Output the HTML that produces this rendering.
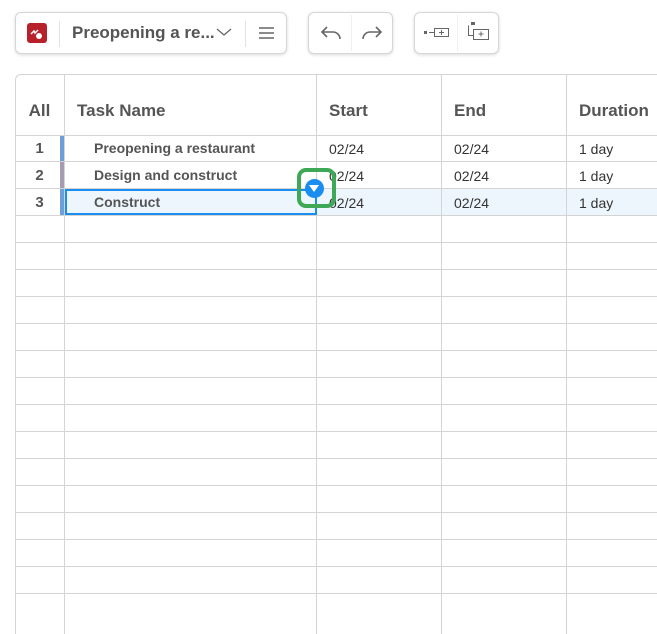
<!DOCTYPE html>
<html><head><style>
*{box-sizing:border-box;margin:0;padding:0}
body{width:657px;height:618px;background:#fff;font-family:"Liberation Sans",sans-serif;position:relative;overflow:hidden;color:#555}
.grp{position:absolute;top:12px;height:42px;border:1px solid #d6d6d6;border-radius:6px;background:#fff;box-shadow:0 1px 3px rgba(0,0,0,.15)}
.sep{position:absolute;top:8px;width:1px;height:26px;background:#e2e2e2}
.sep2{position:absolute;top:2px;width:1px;height:36px;background:#f0f0f0}
.grid{position:absolute;left:15px;top:74px;width:700px;height:560px;border-left:1px solid #d4d4d4;border-top:1px solid #d4d4d4;border-top-left-radius:6px}
.vl{position:absolute;top:74px;width:1px;height:560px;background:#d4d4d4}
.hl{position:absolute;left:15px;width:660px;height:1px;background:#d4d4d4}
.t{position:absolute;font-size:14px;color:#333}
.h{position:absolute;font-size:17px;font-weight:bold;color:#555;top:101px}
.n{position:absolute;font-size:15px;font-weight:bold;color:#555;width:49px;text-align:center;left:15px}
.b{position:absolute;font-size:14px;font-weight:bold;color:#555;left:94px}
</style></head><body>
<div class="grp" style="left:15px;width:272px">
 <div style="position:absolute;left:11px;top:10px;width:20px;height:20px;background:#b8202a;border-radius:3px"></div>
 <svg style="position:absolute;left:13px;top:13px" width="16" height="14"><path d="M2 8l3-3 1 2 3-3" stroke="#fff" stroke-width="1.5" fill="none"/><circle cx="10" cy="10" r="3" fill="#fff"/></svg>
 <div class="sep" style="left:43px"></div>
 <div style="position:absolute;left:56px;top:10px;font-size:17px;font-weight:bold;color:#555">Preopening a re...</div>
 <svg style="position:absolute;left:200px;top:14px" width="16" height="10"><path d="M1 2l7 6 7-6" stroke="#666" stroke-width="1.3" fill="none"/></svg>
 <div class="sep" style="left:229px"></div>
 <svg style="position:absolute;left:243px;top:13px" width="16" height="14"><path d="M0 2h15M0 7h15M0 12h15" stroke="#666" stroke-width="1.4"/></svg>
</div>
<div class="grp" style="left:308px;width:85px">
 <svg style="position:absolute;left:12px;top:12px" width="22" height="16"><path d="M6 2L1 7l5 5M1 7h11a7 7 0 0 1 7 7" stroke="#666" stroke-width="1.6" fill="none"/></svg>
 <div class="sep2" style="left:42px"></div>
 <svg style="position:absolute;left:52px;top:12px" width="22" height="16"><path d="M15 2l5 5-5 5M20 7H9a7 7 0 0 0-7 7" stroke="#666" stroke-width="1.6" fill="none"/></svg>
</div>
<div class="grp" style="left:414px;width:85px">
 <svg style="position:absolute;left:8px;top:12px" width="28" height="16"><rect x="1" y="6" width="3" height="3" fill="#666"/><path d="M6 7.5h5" stroke="#666"/><rect x="11.5" y="3.5" width="14" height="8" stroke="#666" fill="none"/><path d="M18.5 5v5M16 7.5h5" stroke="#666"/></svg>
 <div class="sep2" style="left:42px"></div>
 <svg style="position:absolute;left:51px;top:8px" width="26" height="22"><rect x="5" y="1" width="4" height="3" fill="#666"/><path d="M2.5 4.5v10h5" stroke="#666" fill="none"/><rect x="7.5" y="8.5" width="15" height="10" stroke="#666" fill="none"/><path d="M15 10.5v5M12.5 13h5" stroke="#666"/></svg>
</div>

<div class="grid"></div>
<div style="position:absolute;left:65px;top:189px;width:660px;height:26px;background:#eef6fd"></div>
<div class="vl" style="left:64px"></div>
<div class="vl" style="left:316px"></div>
<div class="vl" style="left:441px"></div>
<div class="vl" style="left:566px"></div>
<div class="hl" style="top:135px"></div>
<div class="hl" style="top:161px"></div>
<div class="hl" style="top:188px"></div>
<div class="hl" style="top:215px"></div>
<div class="hl" style="top:242px"></div>
<div class="hl" style="top:269px"></div>
<div class="hl" style="top:296px"></div>
<div class="hl" style="top:323px"></div>
<div class="hl" style="top:350px"></div>
<div class="hl" style="top:377px"></div>
<div class="hl" style="top:404px"></div>
<div class="hl" style="top:431px"></div>
<div class="hl" style="top:458px"></div>
<div class="hl" style="top:485px"></div>
<div class="hl" style="top:512px"></div>
<div class="hl" style="top:539px"></div>
<div class="hl" style="top:566px"></div>
<div class="hl" style="top:593px"></div>
<div style="position:absolute;left:60px;top:136px;width:4px;height:25px;background:#6a9fd8"></div>
<div style="position:absolute;left:60px;top:162px;width:4px;height:26px;background:#a79bb0"></div>
<div style="position:absolute;left:60px;top:189px;width:4px;height:26px;background:#6a9fd8"></div>
<div style="position:absolute;left:65px;top:189px;width:252px;height:26px;border:2px solid #1a8ef0"></div>

<div class="h" style="left:15px;width:49px;text-align:center">All</div>
<div class="h" style="left:77px">Task Name</div>
<div class="h" style="left:329px">Start</div>
<div class="h" style="left:454px">End</div>
<div class="h" style="left:579px">Duration</div>

<div class="n" style="top:140px">1</div>
<div class="n" style="top:167px">2</div>
<div class="n" style="top:194px">3</div>
<div class="b" style="top:140px">Preopening a restaurant</div>
<div class="b" style="top:167px">Design and construct</div>
<div class="b" style="top:194px">Construct</div>
<div class="t" style="left:329px;top:141px">02/24</div><div class="t" style="left:454px;top:141px">02/24</div><div class="t" style="left:579px;top:141px">1 day</div>
<div class="t" style="left:329px;top:168px">02/24</div><div class="t" style="left:454px;top:168px">02/24</div><div class="t" style="left:579px;top:168px">1 day</div>
<div class="t" style="left:329px;top:195px">02/24</div><div class="t" style="left:454px;top:195px">02/24</div><div class="t" style="left:579px;top:195px">1 day</div>

<div style="position:absolute;left:297px;top:168px;width:39px;height:40px;border:4px solid #3fa856;border-radius:9px"></div>
<div style="position:absolute;left:305px;top:179px;width:19px;height:19px;border-radius:50%;background:#1a8ef0"></div>
<svg style="position:absolute;left:309px;top:185px" width="11" height="8"><path d="M0 0h10L5 7z" fill="#fff"/></svg>
</body></html>
